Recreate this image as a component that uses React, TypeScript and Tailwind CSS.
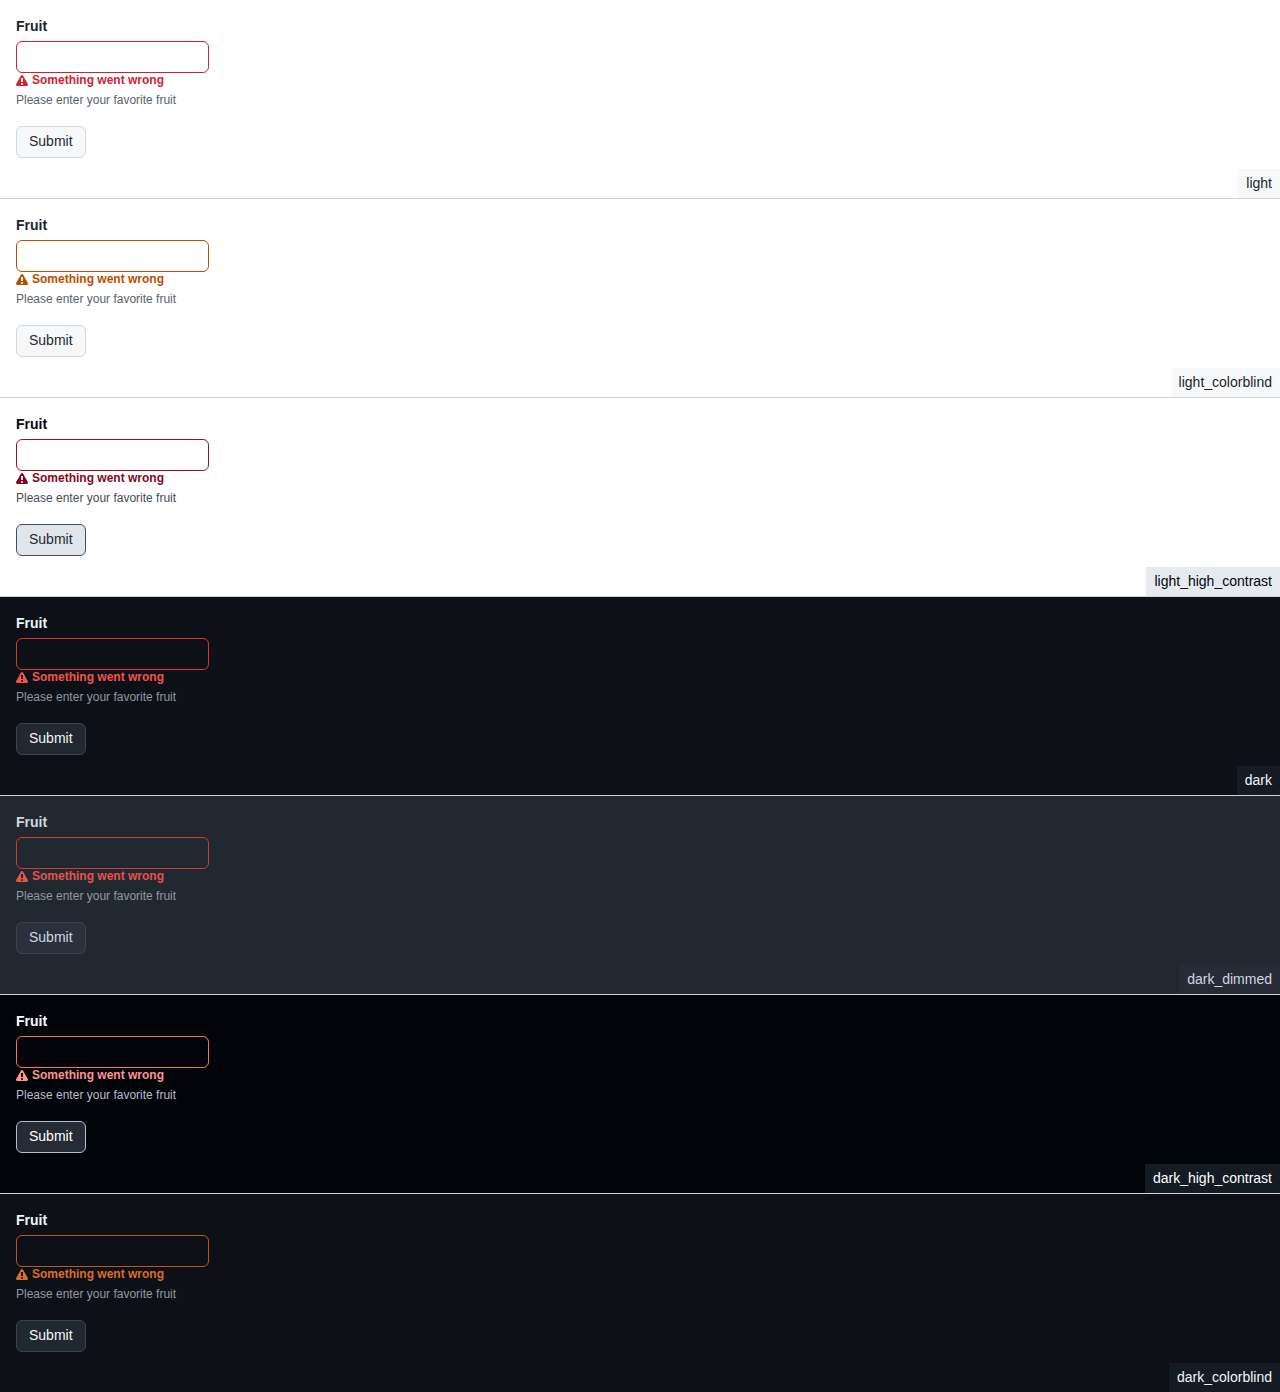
type Theme = {
  name: string;
  page: string;
  input: string;
  error: string;
  caption: string;
  button: string;
  tag: string;
};

const themes: Theme[] = [
  {
    name: 'light',
    page: 'bg-white text-[#1f2328]',
    input: 'border-[#cf222e] bg-white',
    error: 'text-[#d1242f]',
    caption: 'text-[#59636e]',
    button: 'border-[#d1d9e0] bg-[#f6f8fa] text-[#25292e]',
    tag: 'bg-[#f6f8fa]',
  },
  {
    name: 'light_colorblind',
    page: 'bg-white text-[#1f2328]',
    input: 'border-[#bc4c00] bg-white',
    error: 'text-[#bc4c00]',
    caption: 'text-[#59636e]',
    button: 'border-[#d1d9e0] bg-[#f6f8fa] text-[#25292e]',
    tag: 'bg-[#f6f8fa]',
  },
  {
    name: 'light_high_contrast',
    page: 'bg-white text-[#010409]',
    input: 'border-[#a0111f] bg-white',
    error: 'text-[#86061d]',
    caption: 'text-[#454c54]',
    button: 'border-[#454c54] bg-[#e0e6eb] text-[#25292e]',
    tag: 'bg-[#e6eaef]',
  },
  {
    name: 'dark',
    page: 'bg-[#0d1117] text-[#f0f6fc]',
    input: 'border-[#da3633] bg-[#0d1117]',
    error: 'text-[#f85149]',
    caption: 'text-[#9198a1]',
    button: 'border-[#3d444d] bg-[#212830] text-[#f0f6fc]',
    tag: 'bg-[#151b23]',
  },
  {
    name: 'dark_dimmed',
    page: 'bg-[#212830] text-[#d1d7e0]',
    input: 'border-[#c93c37] bg-[#212830]',
    error: 'text-[#e5534b]',
    caption: 'text-[#9198a1]',
    button: 'border-[#3d444d] bg-[#2a313c] text-[#d1d7e0]',
    tag: 'bg-[#262c36]',
  },
  {
    name: 'dark_high_contrast',
    page: 'bg-[#010409] text-white',
    input: 'border-[#ff6a69] bg-[#010409]',
    error: 'text-[#ff9492]',
    caption: 'text-[#b7bdc8]',
    button: 'border-[#b7bdc8] bg-[#262c36] text-white',
    tag: 'bg-[#151b23]',
  },
  {
    name: 'dark_colorblind',
    page: 'bg-[#0d1117] text-[#f0f6fc]',
    input: 'border-[#bd561d] bg-[#0d1117]',
    error: 'text-[#db6d28]',
    caption: 'text-[#9198a1]',
    button: 'border-[#3d444d] bg-[#212830] text-[#f0f6fc]',
    tag: 'bg-[#151b23]',
  },
];

function AlertIcon() {
  return (
    <svg className="mt-0.5" viewBox="0 0 12 12" width="12" height="12" fill="currentColor" aria-hidden="true">
      <path d="M4.855.708c.5-.896 1.79-.896 2.29 0l4.675 8.351a1.312 1.312 0 0 1-1.146 1.954H1.33A1.313 1.313 0 0 1 .183 9.058ZM7 7V3H5v4Zm-1 3a1 1 0 1 0 0-2 1 1 0 0 0 0 2Z" />
    </svg>
  );
}

function ThemePanel({ theme }: { theme: Theme }) {
  return (
    <section className={`relative h-[199px] border-b border-[#d3d3d3] p-4 text-sm ${theme.page}`}>
      <form className="flex flex-col items-start" onSubmit={(e) => e.preventDefault()}>
        <label className="mb-1 flex flex-col gap-1 font-semibold leading-[21px]">
          Fruit
          <input type="text" className={`h-8 w-[193px] rounded-md border px-3 font-normal outline-none ${theme.input}`} />
        </label>
        <p className={`-mt-1 flex items-center gap-1 text-xs font-semibold leading-[14px] ${theme.error}`}>
          <AlertIcon />
          Something went wrong
        </p>
        <p className={`mt-1 text-xs leading-[18px] ${theme.caption}`}>Please enter your favorite fruit</p>
        <button type="submit" className={`mt-[17px] h-8 w-[70px] rounded-md border px-3 pb-0.5 text-left font-medium leading-5 ${theme.button}`}>
          Submit
        </button>
      </form>
      <div className={`absolute right-0 bottom-0 px-2 py-1 leading-[21px] ${theme.tag}`}>{theme.name}</div>
    </section>
  );
}

export default function App() {
  return (
    <main className="h-[1392px] overflow-hidden font-['Liberation_Sans',Arial,sans-serif]">
      {themes.map((theme) => (
        <ThemePanel key={theme.name} theme={theme} />
      ))}
    </main>
  );
}
